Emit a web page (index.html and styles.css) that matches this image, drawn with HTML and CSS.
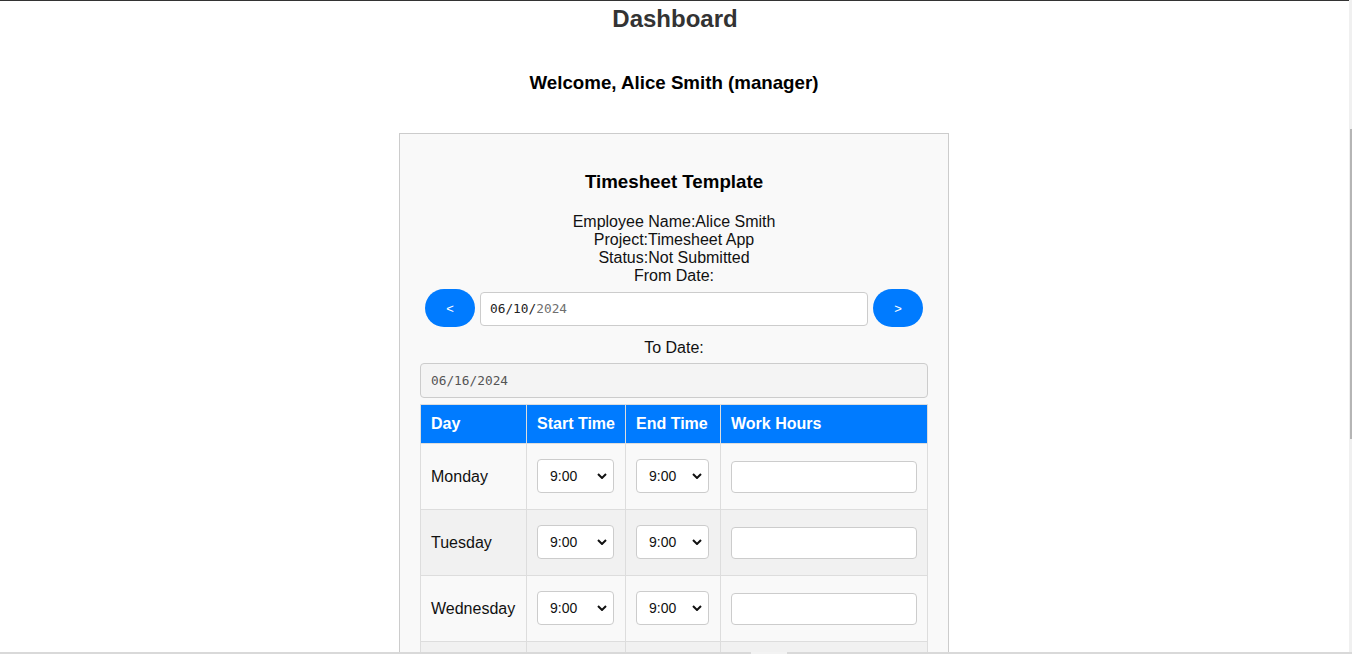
FILE: index.html
```html
<!DOCTYPE html>
<html lang="en">
<head>
<meta charset="utf-8">
<title>Dashboard</title>
<link rel="stylesheet" href="styles.css">
</head>
<body>
<div class="page">
  <h1 class="page-title">Dashboard</h1>
  <h3 class="welcome">Welcome, Alice Smith (manager)</h3>
  <div class="card">
    <h3 class="card-title">Timesheet Template</h3>
    <div class="info">
      <div>Employee Name:Alice Smith</div>
      <div>Project:Timesheet App</div>
      <div>Status:Not Submitted</div>
      <div>From Date:</div>
    </div>
    <div class="date-row">
      <button class="nav-btn">&lt;</button>
      <div class="date-field"><span class="dark">06/10/</span><span class="muted">2024</span></div>
      <button class="nav-btn">&gt;</button>
    </div>
    <div class="to-label">To Date:</div>
    <div class="date-field disabled"><span>06/16/2024</span></div>
    <table class="sheet">
      <thead>
        <tr><th class="c-day">Day</th><th class="c-start">Start Time</th><th class="c-end">End Time</th><th class="c-hours">Work Hours</th></tr>
      </thead>
      <tbody>
        <tr>
          <td>Monday</td>
          <td><div class="sel sel-start"><span>9:00</span><svg viewBox="0 0 10 6" class="chev"><path d="M1 1 L5 5 L9 1"/></svg></div></td>
          <td><div class="sel sel-end"><span>9:00</span><svg viewBox="0 0 10 6" class="chev"><path d="M1 1 L5 5 L9 1"/></svg></div></td>
          <td><div class="hours"></div></td>
        </tr>
        <tr>
          <td>Tuesday</td>
          <td><div class="sel sel-start"><span>9:00</span><svg viewBox="0 0 10 6" class="chev"><path d="M1 1 L5 5 L9 1"/></svg></div></td>
          <td><div class="sel sel-end"><span>9:00</span><svg viewBox="0 0 10 6" class="chev"><path d="M1 1 L5 5 L9 1"/></svg></div></td>
          <td><div class="hours"></div></td>
        </tr>
        <tr>
          <td>Wednesday</td>
          <td><div class="sel sel-start"><span>9:00</span><svg viewBox="0 0 10 6" class="chev"><path d="M1 1 L5 5 L9 1"/></svg></div></td>
          <td><div class="sel sel-end"><span>9:00</span><svg viewBox="0 0 10 6" class="chev"><path d="M1 1 L5 5 L9 1"/></svg></div></td>
          <td><div class="hours"></div></td>
        </tr>
        <tr>
          <td>Thursday</td>
          <td><div class="sel sel-start"><span>9:00</span><svg viewBox="0 0 10 6" class="chev"><path d="M1 1 L5 5 L9 1"/></svg></div></td>
          <td><div class="sel sel-end"><span>9:00</span><svg viewBox="0 0 10 6" class="chev"><path d="M1 1 L5 5 L9 1"/></svg></div></td>
          <td><div class="hours"></div></td>
        </tr>
      </tbody>
    </table>
  </div>
</div>
<div class="vscroll"><div class="vthumb"></div></div>
<div class="hscroll"><div class="hthumb"></div></div>
</body>
</html>
```

FILE: styles.css
```css
html, body {
  margin: 0;
  padding: 0;
  height: 100%;
  overflow: hidden;
  background: #ffffff;
}

body {
  font-family: "Liberation Sans", Arial, sans-serif;
  color: #000;
  border-top: 1px solid #333;
  box-sizing: border-box;
}

.page {
  width: 1348px;
  text-align: center;
}

.page-title {
  margin: 4px 0 0;
  padding-left: 2px;
  font-size: 24px;
  line-height: 28px;
  font-weight: bold;
  color: #333;
}

.welcome {
  margin: 39px 0 0;
  font-size: 18.72px;
  line-height: 22px;
  font-weight: bold;
}

.card {
  width: 508px;
  margin: 39px auto 0;
  padding: 20px;
  background: #f9f9f9;
  border: 1px solid #ccc;
}

.card-title {
  margin: 16px 0 0;
  font-size: 18.72px;
  line-height: 24px;
  font-weight: bold;
}

.info {
  margin-top: 19px;
  font-size: 16px;
  line-height: 18px;
  color: #111;
}

.date-row {
  display: flex;
  align-items: center;
}

.nav-btn {
  flex: 0 0 50px;
  height: 38px;
  margin: 4px 5px 5px;
  border: none;
  border-radius: 19px;
  background: #007bff;
  color: #fff;
  font-family: "Liberation Sans", Arial, sans-serif;
  font-size: 13px;
  padding: 0;
}

.date-field {
  flex: 1;
  box-sizing: border-box;
  height: 34px;
  padding: 0 9px;
  display: flex;
  align-items: center;
  background: #fff;
  border: 1px solid #ccc;
  border-radius: 4px;
  font-family: "DejaVu Sans Mono", monospace;
  font-size: 12.8px;
  text-align: left;
}

.date-field .dark { color: #222; }
.date-field .muted { color: #6f6f6f; }

.to-label {
  margin-top: 7px;
  font-size: 16px;
  line-height: 18px;
  color: #111;
}

.date-field.disabled {
  margin-top: 6px;
  height: 35px;
  padding: 0 10px;
  background: #f4f4f4;
  color: #555;
}

.sheet {
  margin-top: 6px;
  width: 508px;
  border-collapse: collapse;
  table-layout: fixed;
  text-align: left;
}

.sheet th {
  background: #007bff;
  color: #fff;
  font-size: 16px;
  line-height: 18px;
  font-weight: bold;
  padding: 10px 10px;
  border: 1px solid #ddd;
  white-space: nowrap;
  overflow: hidden;
}

.c-day { width: 85px; }
.c-start { width: 78px; }
.c-end { width: 74px; }

.sheet td {
  padding: 0 10px;
  height: 65px;
  border: 1px solid #ddd;
  font-size: 16px;
  color: #111;
}

.sheet tbody tr:nth-child(odd) { background: #f9f9f9; }
.sheet tbody tr:nth-child(even) { background: #f1f1f1; }

.sel {
  position: relative;
  box-sizing: border-box;
  height: 34px;
  margin-top: -1px;
  padding: 0 12px;
  display: flex;
  align-items: center;
  background: #fff;
  border: 1px solid #ccc;
  border-radius: 4px;
  font-size: 14px;
  color: #111;
}

.sel-start { width: 77px; }
.sel-end { width: 73px; }

.chev {
  position: absolute;
  right: 6px;
  top: 13px;
  width: 10px;
  height: 6px;
  fill: none;
  stroke: #111;
  stroke-width: 2;
}

.hours {
  box-sizing: border-box;
  width: 186px;
  height: 32px;
  background: #fff;
  border: 1px solid #ccc;
  border-radius: 4px;
}

.vscroll {
  position: fixed;
  top: 0;
  right: 0;
  width: 3px;
  height: 100%;
  background: #f0f0f0;
}

.vthumb {
  position: absolute;
  top: 129px;
  right: 0;
  width: 2px;
  height: 310px;
  background: #b5b5b5;
}

.hscroll {
  position: fixed;
  left: 0;
  bottom: 0;
  width: 100%;
  height: 2px;
  background: #d9d9d9;
}

.hthumb {
  position: absolute;
  left: 751px;
  top: 0;
  width: 36px;
  height: 2px;
  background: #f3f3f3;
}
```
